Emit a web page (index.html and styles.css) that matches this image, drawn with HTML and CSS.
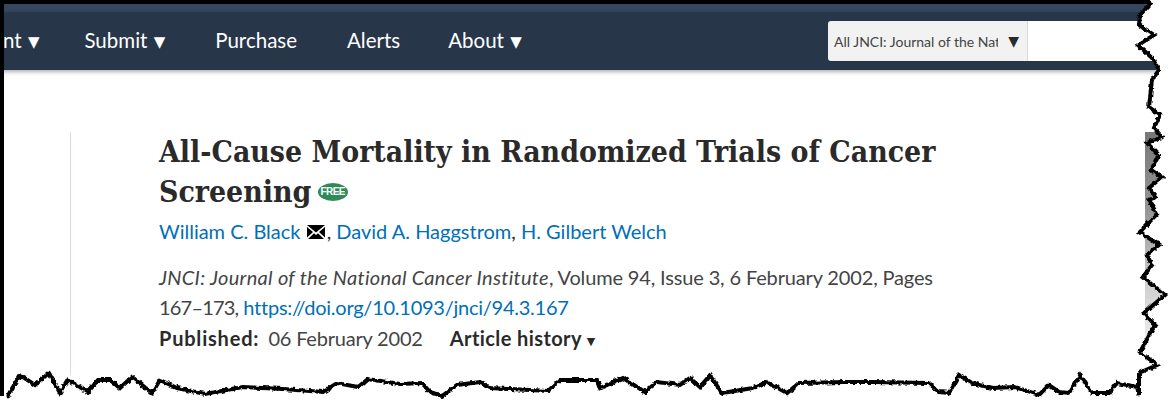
FILE: index.html
```html
<!DOCTYPE html>
<html lang="en">
<head>
    <title>All-Cause Mortality in Randomized Trials of Cancer Screening</title>
    <link rel="stylesheet" href="styles.css">
</head>
<body>
    <div class="top-strip"></div>
    <nav class="main-nav">
      <ul class="nav-links">
        <li class="clipped">nt <span class="arrow">▼</span></li>
        <li>Submit <span class="arrow">▼</span></li>
        <li>Purchase</li>
        <li class="alerts">Alerts</li>
        <li>About <span class="arrow">▼</span></li>
      </ul>
      <form class="nav-search">
        <div class="search-scope">
          <span class="scope-text">All JNCI: Journal of the Nat</span>
          <span class="arrow dark">▼</span>
        </div>
        <div class="search-input"></div>
      </form>
    </nav>

    <div class="content">
      <main class="article">
        <h1>All-Cause Mortality in Randomized Trials of Cancer Screening <span class="free">FREE</span></h1>
        <p class="authors">
          <a href="#">William C. Black</a>
          <svg class="mail" viewBox="0 0 18 14" width="18" height="14">
            <path d="M0 0H18L9 7.5Z"/>
            <path d="M0 2L6 7L0 12.5Z"/>
            <path d="M18 2L12 7L18 12.5Z"/>
            <path d="M1 14L7 8.3L9 10L11 8.3L17 14Z"/>
          </svg>, <a href="#">David A. Haggstrom</a>, <a href="#">H. Gilbert Welch</a>
        </p>
        <p class="citation">
          <em>JNCI: Journal of the National Cancer Institute</em>, Volume 94, Issue 3, 6 February 2002, Pages <span class="cite-pages">167–173,</span> <a class="doi" href="#">https://doi.org/10.1093/jnci/94.3.167</a>
        </p>
        <div class="dates">
          <b class="pub-label">Published:</b>
          <span class="pub-date">06 February 2002</span>
          <b class="history">Article history <span class="small-arrow">▼</span></b>
        </div>
      </main>
      <div class="side-strip"></div>
    </div>

    <!-- torn paper edge from the screenshot tool -->
    <svg class="torn" viewBox="0 0 1172 406" width="1172" height="406">
      <defs>
        <filter id="rough" x="0" y="0" width="100%" height="100%" filterUnits="userSpaceOnUse">
          <feTurbulence type="fractalNoise" baseFrequency="0.25" numOctaves="2" seed="4"/>
          <feDisplacementMap in="SourceGraphic" scale="4" xChannelSelector="R" yChannelSelector="G"/>
        </filter>
      </defs>
      <path class="torn-mask" fill-rule="evenodd" d="M0 0H1172V406H0Z M2 2L1152 2L1140 15L1139 25L1154 35L1138 45L1152 58L1159 70L1152 80L1149 107L1160 115L1154 128L1162 137L1147 143L1159 155L1151 170L1162 177L1149 188L1156 197L1149 200L1157 214L1140 232L1159 245L1147 255L1152 265L1143 277L1165 295L1144 313L1155 325L1140 352L1157 365L1139 373L1139 395L1137 387L1117 383L1109 393L1092 393L1080 375L1069 393L1059 392L1049 385L1039 395L1015 387L992 388L972 383L959 375L949 393L939 392L929 383L872 382L845 382L799 383L787 393L767 382L753 388L722 393L710 375L700 387L690 378L680 385L657 382L645 392L623 378L600 388L597 380L560 380L548 391L490 388L480 382L457 385L442 396L430 392L422 383L400 384L368 379L358 387L337 383L323 392L283 389L243 387L205 394L177 388L160 380L152 393L132 377L120 388L110 380L98 380L88 392L68 380L60 393L49 373L35 385L20 375L7 397L2 396Z"/>
      <path class="torn-line rough" d="M1152 2L1140 15L1139 25L1154 35L1138 45L1152 58L1159 70L1152 80L1149 107L1160 115L1154 128L1162 137L1147 143L1159 155L1151 170L1162 177L1149 188L1156 197L1149 200L1157 214L1140 232L1159 245L1147 255L1152 265L1143 277L1165 295L1144 313L1155 325L1140 352L1157 365L1139 373L1139 395L1137 387L1117 383L1109 393L1092 393L1080 375L1069 393L1059 392L1049 385L1039 395L1015 387L992 388L972 383L959 375L949 393L939 392L929 383L872 382L845 382L799 383L787 393L767 382L753 388L722 393L710 375L700 387L690 378L680 385L657 382L645 392L623 378L600 388L597 380L560 380L548 391L490 388L480 382L457 385L442 396L430 392L422 383L400 384L368 379L358 387L337 383L323 392L283 389L243 387L205 394L177 388L160 380L152 393L132 377L120 388L110 380L98 380L88 392L68 380L60 393L49 373L35 385L20 375L7 397"/>
      <path class="torn-line" d="M2 396V2H1150"/>
    </svg>
</body>
</html>
```

FILE: styles.css
```css
html, body {
  margin: 0;
  height: 406px;
  overflow: hidden;
  background: white;
}

body {
  position: relative;
  font-family: "Lato", "Noto Sans", sans-serif;
  color: #2a2a2a;
}

.top-strip {
  height: 12px;
  background-color: #34475f;
}

.main-nav {
  display: flex;
  justify-content: space-between;
  align-items: center;
  height: 58px;
  background-color: #28364a;
  box-shadow: 0 2px 4px rgba(0, 0, 0, 0.3);
  position: relative;
}

.nav-links {
  display: flex;
  gap: 50px;
  margin: 0;
  padding: 0 0 2px 3px;
  list-style: none;
  color: white;
  font-size: 20.5px;
}

.clipped {
  margin-right: -5px;
}

.alerts {
  margin-right: -2px;
}

.arrow {
  font-family: "DejaVu Sans", sans-serif;
  font-size: 15px;
  margin-left: 1px;
  vertical-align: 1px;
}

.arrow.dark {
  color: #2a2a2a;
  font-size: 14px;
  margin: 0;
}

.nav-search {
  display: flex;
  height: 40px;
  width: 344px;
}

.search-scope {
  display: flex;
  align-items: center;
  justify-content: space-between;
  width: 200px;
  box-sizing: border-box;
  padding: 0 8px 0 6px;
  background-color: #f2f2f2;
  border-right: 1px solid #d8d8d8;
  border-radius: 3px 0 0 3px;
  font-size: 14px;
  color: #444;
}

.scope-text {
  width: 164px;
  overflow: hidden;
  white-space: nowrap;
}

.search-input {
  flex: 1;
  background: white;
}

.content {
  display: flex;
  justify-content: space-between;
  padding-top: 62px;
}

.article {
  width: 790px;
  margin-left: 70px;
  padding-left: 88px;
  border-left: 1px solid #d5dbe8;
  height: 243px;
}

.side-strip {
  width: 27px;
  height: 210px;
  background: linear-gradient(#777, #999 40%, #ccc 70%, #eee);
}

h1 {
  margin: 0;
  font-family: "DejaVu Serif Condensed", "DejaVu Serif", serif;
  font-size: 29.9px;
  line-height: 40px;
  font-weight: bold;
  color: #2a2a2a;
}

.free {
  display: inline-block;
  width: 30px;
  height: 18px;
  margin-left: -3px;
  line-height: 18px;
  border-radius: 50%;
  background-color: #2e8b57;
  color: white;
  font-family: "Liberation Sans", sans-serif;
  font-size: 10px;
  letter-spacing: -0.6px;
  text-align: center;
  vertical-align: 7px;
}

.authors {
  margin: 7px 0 0;
  font-size: 20px;
  line-height: 24px;
}

a {
  color: #006fb7;
  text-decoration: none;
}

.mail {
  margin-left: 1px;
  margin-right: 2px;
  vertical-align: 0;
}

.citation {
  margin: 19px 0 0;
  font-size: 20px;
  line-height: 30px;
  color: #444;
  letter-spacing: -0.15px;
}

.citation em {
  color: #444;
  letter-spacing: 0.3px;
}

.cite-pages {
  letter-spacing: -0.8px;
}

.doi {
  letter-spacing: -0.25px;
}

.dates {
  margin-top: 1px;
  font-size: 20px;
  line-height: 30px;
  color: #444;
}

.dates b {
  color: #2a2a2a;
  letter-spacing: 0.4px;
}

.dates .pub-label {
  letter-spacing: 0.8px;
}

.pub-date {
  margin-left: 4px;
  letter-spacing: -0.2px;
}

.history {
  margin-left: 22px;
}

.small-arrow {
  font-family: "DejaVu Sans", sans-serif;
  font-size: 11px;
  vertical-align: 1px;
}

.torn {
  position: absolute;
  left: 0;
  top: 0;
}

.torn-mask {
  fill: white;
}

.torn-line {
  fill: none;
  stroke: black;
  stroke-width: 4;
}

.rough {
  filter: url(#rough);
}
```
